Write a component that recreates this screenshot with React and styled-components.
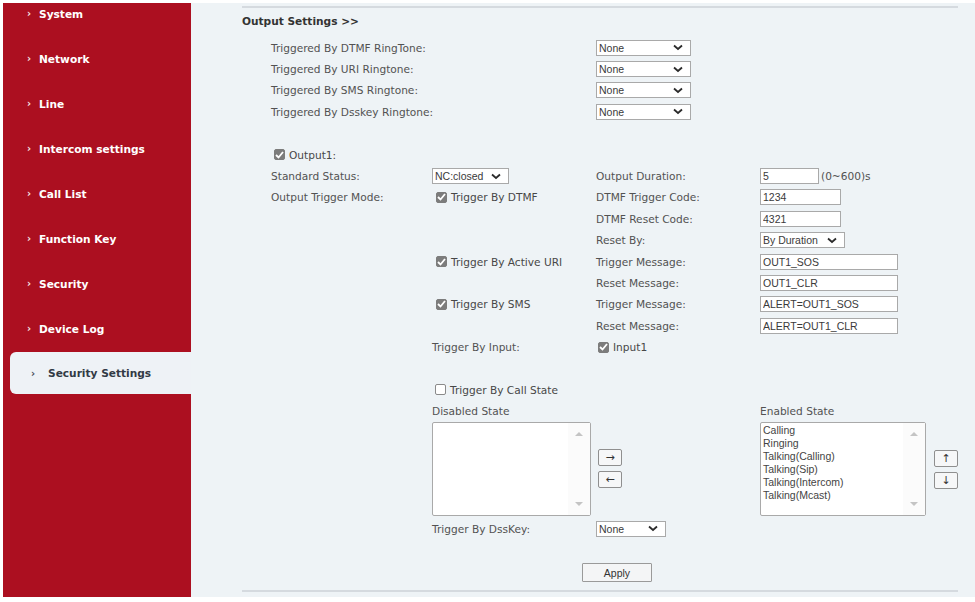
import React from 'react';
import styled, { createGlobalStyle } from 'styled-components';

const GlobalStyle = createGlobalStyle`
    html, body {
        margin: 0;
        padding: 0;
        background: #ffffff;
    }
    body {
        font-family: "DejaVu Sans", Verdana, sans-serif;
    }
`

const Page = styled.div`
    display: flex;
    height: 602px;
    box-sizing: border-box;
    padding: 3px 7px 5px 3px;
`

const Sidebar = styled.nav`
    width: 188px;
    flex: none;
    background: #ac0f20;
    overflow: hidden;
`

const NavList = styled.ul`
    list-style: none;
    margin: -12px 0 0;
    padding: 0;
`

const NavItem = styled.li`
    display: flex;
    align-items: center;
    height: ${props => props.$active ? '42px' : '45px'};
    margin: ${props => props.$active ? '1px 0 0 7px' : '0'};
    padding-left: ${props => props.$active ? '21px' : '24px'};
    background: ${props => props.$active ? '#eef2f6' : 'transparent'};
    border-radius: ${props => props.$active ? '6px 0 0 6px' : '0'};
    color: ${props => props.$active ? '#323a45' : '#ffffff'};
    font-size: 10.6px;
    font-weight: bold;
`

const Bullet = styled.span`
    width: ${props => props.$active ? '17px' : '12px'};
    font-size: 10px;
    opacity: 0.9;
`

const Content = styled.main`
    flex: 1;
    display: flex;
    flex-direction: column;
    background: #eef3f6;
    padding: 3px 22px 0 51px;
`

const Rule = styled.div`
    height: 2px;
    background: #d5dadf;
    margin-top: ${props => props.$gap || 0}px;
`

const Title = styled.div`
    margin-top: 6px;
    line-height: 14px;
    font-size: 10.6px;
    font-weight: bold;
    color: #333;
`

const Form = styled.div`
    display: grid;
    margin: 9px 0 0 29px;
    grid-template-columns: 161px 164px 164px 1fr;
    grid-template-rows: repeat(18, 21.4px) 96px 21px;
    align-items: center;
    font-size: 10.6px;
    color: #525252;
`

const Cell = styled.div`
    grid-column: ${props => props.$col} / span ${props => props.$span || 1};
    grid-row: ${props => props.$row};
    display: flex;
    align-items: center;
    align-self: ${props => props.$top ? 'start' : 'center'};
    padding-left: ${props => props.$indent || 0}px;
    white-space: nowrap;
`

const CheckBox = styled.span`
    display: inline-flex;
    align-items: center;
    justify-content: center;
    box-sizing: border-box;
    width: 11px;
    height: 11px;
    margin-right: 4px;
    border-radius: 2px;
    background: ${props => props.$checked ? '#7c7c7c' : '#ffffff'};
    border: 1px solid ${props => props.$checked ? '#7c7c7c' : '#8a8a8a'};
`

const CheckLabel = styled.span`
    color: #474747;
`

const SelectBox = styled.span`
    display: inline-flex;
    align-items: center;
    justify-content: space-between;
    box-sizing: border-box;
    width: ${props => props.$width}px;
    height: 16px;
    padding: 0 7px 0 2px;
    background: #ffffff;
    border: 1px solid #a9a9a9;
    font-family: "Liberation Sans", Arial, sans-serif;
    font-size: 10.5px;
    color: #3a3a3a;
`

const TextInput = styled.input`
    box-sizing: border-box;
    width: ${props => props.$width}px;
    height: 16px;
    padding: 0 2px;
    margin: 0;
    background: #ffffff;
    border: 1px solid #a9a9a9;
    outline: none;
    font-family: "Liberation Sans", Arial, sans-serif;
    font-size: 10.5px;
    color: #3a3a3a;
`

const Unit = styled.span`
    margin-left: 2px;
    color: #525252;
`

const ListGroup = styled.div`
    display: flex;
    gap: ${props => props.$gap}px;
`

const ListBox = styled.div`
    position: relative;
    box-sizing: border-box;
    width: ${props => props.$width}px;
    height: 94px;
    padding: 1px 24px 0 2px;
    background: #ffffff;
    border: 1px solid #a9a9a9;
    border-radius: 2px;
    font-family: "Liberation Sans", Arial, sans-serif;
    font-size: 10.5px;
    line-height: 13px;
    color: #444;
`

const ScrollTrack = styled.div`
    position: absolute;
    top: 0;
    right: 0;
    bottom: 0;
    width: 22px;
    display: flex;
    flex-direction: column;
    justify-content: space-between;
    align-items: center;
    padding: 9px 0 9px;
    box-sizing: border-box;
    background: #fbfbfb;
`

const ScrollArrow = styled.span`
    width: 0;
    height: 0;
    border-left: 4px solid transparent;
    border-right: 4px solid transparent;
    border-bottom: ${props => props.$down ? '0' : '4px solid #c4c4c4'};
    border-top: ${props => props.$down ? '4px solid #c4c4c4' : '0'};
`

const MoveButtons = styled.div`
    display: flex;
    flex-direction: column;
    gap: 5px;
    padding-top: ${props => props.$top}px;
`

const MoveButton = styled.span`
    display: flex;
    align-items: center;
    justify-content: center;
    box-sizing: border-box;
    width: 24px;
    height: 17px;
    background: #f6f7f8;
    border: 1px solid #8f8f8f;
    border-radius: 2px;
    font-family: "DejaVu Sans", sans-serif;
    font-size: 11px;
    color: #333;
`

const ActionBar = styled.div`
    display: flex;
    margin-top: 24px;
    padding-left: 340px;
`

const ApplyButton = styled.button`
    box-sizing: border-box;
    width: 70px;
    height: 19px;
    padding: 0;
    background: #f4f5f6;
    border: 1px solid #9a9a9a;
    border-radius: 1px;
    font-family: "Liberation Sans", Arial, sans-serif;
    font-size: 10.5px;
    color: #333;
`

const NAV = [
    'System', 'Network', 'Line', 'Intercom settings', 'Call List',
    'Function Key', 'Security', 'Device Log', 'Security Settings'
]

const RINGTONES = [
    'Triggered By DTMF RingTone:',
    'Triggered By URI Ringtone:',
    'Triggered By SMS Ringtone:',
    'Triggered By Dsskey Ringtone:'
]

const ENABLED_STATES = [
    'Calling', 'Ringing', 'Talking(Calling)', 'Talking(Sip)', 'Talking(Intercom)', 'Talking(Mcast)'
]

const Check = ({ checked, label }) => (
    <>
        <CheckBox $checked={checked}>
            {checked && (
                <svg width="9" height="8" viewBox="0 0 9 8">
                    <polyline points="1,4 3.5,6.5 8,1" fill="none" stroke="#fff" strokeWidth="1.8" />
                </svg>
            )}
        </CheckBox>
        <CheckLabel>{label}</CheckLabel>
    </>
)

const Select = ({ value, width }) => (
    <SelectBox $width={width}>
        <span>{value}</span>
        <svg width="10" height="7" viewBox="0 0 10 7">
            <polyline points="1,1.5 5,5 9,1.5" fill="none" stroke="#2b2b2b" strokeWidth="1.8" />
        </svg>
    </SelectBox>
)

const Input = ({ value, width }) => <TextInput $width={width} value={value} readOnly />

class App extends React.Component {

    renderNav() {
        return (
            <Sidebar>
                <NavList>
                    {NAV.map((name, i) => {
                        const active = i === NAV.length - 1
                        return (
                            <NavItem key={name} $active={active}>
                                <Bullet $active={active}>›</Bullet>
                                {name}
                            </NavItem>
                        )
                    })}
                </NavList>
            </Sidebar>
        )
    }

    renderForm() {
        return (
            <Form>
                {RINGTONES.map((label, i) => (
                    <React.Fragment key={label}>
                        <Cell $col={1} $span={2} $row={i + 1}>{label}</Cell>
                        <Cell $col={3} $row={i + 1}><Select value="None" width={95} /></Cell>
                    </React.Fragment>
                ))}

                <Cell $col={1} $row={6} $indent={3}><Check checked label="Output1:" /></Cell>

                <Cell $col={1} $row={7}>Standard Status:</Cell>
                <Cell $col={2} $row={7}><Select value="NC:closed" width={77} /></Cell>
                <Cell $col={3} $row={7}>Output Duration:</Cell>
                <Cell $col={4} $row={7}><Input value="5" width={59} /><Unit>(0~600)s</Unit></Cell>

                <Cell $col={1} $row={8}>Output Trigger Mode:</Cell>
                <Cell $col={2} $row={8} $indent={4}><Check checked label="Trigger By DTMF" /></Cell>
                <Cell $col={3} $row={8}>DTMF Trigger Code:</Cell>
                <Cell $col={4} $row={8}><Input value="1234" width={81} /></Cell>

                <Cell $col={3} $row={9}>DTMF Reset Code:</Cell>
                <Cell $col={4} $row={9}><Input value="4321" width={81} /></Cell>

                <Cell $col={3} $row={10}>Reset By:</Cell>
                <Cell $col={4} $row={10}><Select value="By Duration" width={85} /></Cell>

                <Cell $col={2} $row={11} $indent={4}><Check checked label="Trigger By Active URI" /></Cell>
                <Cell $col={3} $row={11}>Trigger Message:</Cell>
                <Cell $col={4} $row={11}><Input value="OUT1_SOS" width={138} /></Cell>

                <Cell $col={3} $row={12}>Reset Message:</Cell>
                <Cell $col={4} $row={12}><Input value="OUT1_CLR" width={138} /></Cell>

                <Cell $col={2} $row={13} $indent={4}><Check checked label="Trigger By SMS" /></Cell>
                <Cell $col={3} $row={13}>Trigger Message:</Cell>
                <Cell $col={4} $row={13}><Input value="ALERT=OUT1_SOS" width={138} /></Cell>

                <Cell $col={3} $row={14}>Reset Message:</Cell>
                <Cell $col={4} $row={14}><Input value="ALERT=OUT1_CLR" width={138} /></Cell>

                <Cell $col={2} $row={15}>Trigger By Input:</Cell>
                <Cell $col={3} $row={15} $indent={2}><Check checked label="Input1" /></Cell>

                <Cell $col={2} $row={17} $indent={3}><Check label="Trigger By Call State" /></Cell>
                <Cell $col={2} $row={18}>Disabled State</Cell>
                <Cell $col={4} $row={18}>Enabled State</Cell>

                <Cell $col={2} $span={2} $row={19} $top>
                    <ListGroup $gap={7}>
                        <ListBox $width={159}>
                            <ScrollTrack><ScrollArrow /><ScrollArrow $down /></ScrollTrack>
                        </ListBox>
                        <MoveButtons $top={27}>
                            <MoveButton>→</MoveButton>
                            <MoveButton>←</MoveButton>
                        </MoveButtons>
                    </ListGroup>
                </Cell>
                <Cell $col={4} $row={19} $top>
                    <ListGroup $gap={8}>
                        <ListBox $width={166}>
                            {ENABLED_STATES.map(s => <div key={s}>{s}</div>)}
                            <ScrollTrack><ScrollArrow /><ScrollArrow $down /></ScrollTrack>
                        </ListBox>
                        <MoveButtons $top={28}>
                            <MoveButton>↑</MoveButton>
                            <MoveButton>↓</MoveButton>
                        </MoveButtons>
                    </ListGroup>
                </Cell>

                <Cell $col={2} $row={20}>Trigger By DssKey:</Cell>
                <Cell $col={3} $row={20}><Select value="None" width={70} /></Cell>
            </Form>
        )
    }

    render() {
        return (
            <>
                <GlobalStyle />
                <Page>
                    {this.renderNav()}
                    <Content>
                        <Rule />
                        <Title>Output Settings &gt;&gt;</Title>
                        {this.renderForm()}
                        <ActionBar>
                            <ApplyButton>Apply</ApplyButton>
                        </ActionBar>
                        <Rule $gap={8} />
                    </Content>
                </Page>
            </>
        )
    }
}

export default App;
